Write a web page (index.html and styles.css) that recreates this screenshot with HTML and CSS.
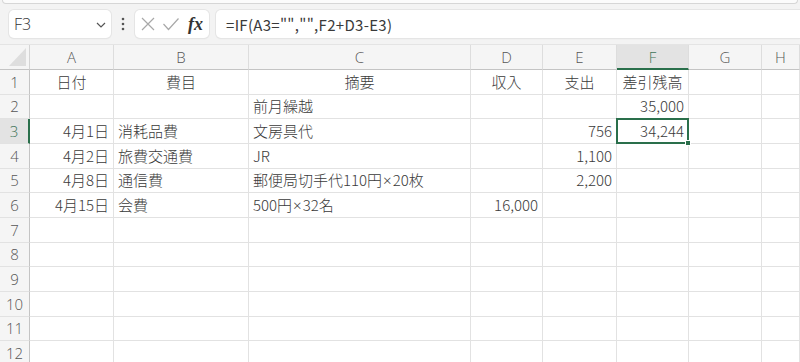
FILE: index.html
```html
<!DOCTYPE html>
<html lang="ja">
<head>
<meta charset="utf-8">
<link rel="stylesheet" href="styles.css">
</head>
<body>
<div class="app">
  <div class="toolbar">
    <div class="topstrip"></div>
    <div class="bar">
      <div class="namebox">
        <span class="name">F3</span>
        <svg class="chev" width="10" height="6" viewBox="0 0 10 6"><polyline points="1,1 5,5 9,1" fill="none" stroke="#555" stroke-width="1.2"/></svg>
      </div>
      <div class="dots">
        <svg width="4" height="14" viewBox="0 0 4 14"><circle cx="2" cy="2" r="1.3" fill="#555"/><circle cx="2" cy="7" r="1.3" fill="#555"/><circle cx="2" cy="12" r="1.3" fill="#555"/></svg>
      </div>
      <div class="fxbox">
        <svg class="ico" width="16" height="16" viewBox="0 0 16 16"><path d="M2 2 L14 14 M14 2 L2 14" stroke="#a8a8a8" stroke-width="1.2" fill="none"/></svg>
        <svg class="ico" width="18" height="16" viewBox="0 0 18 16"><polyline points="1.5,8 6.5,13.5 16.5,2.5" stroke="#a8a8a8" stroke-width="1.2" fill="none"/></svg>
        <span class="fx">fx</span>
      </div>
      <div class="formula">=IF(A3="","",F2+D3-E3)</div>
    </div>
  </div>
  <div class="sheet">
    <div class="corner"></div>
    <div class="ch">A</div><div class="ch">B</div><div class="ch">C</div><div class="ch">D</div><div class="ch">E</div><div class="ch sel">F</div><div class="ch">G</div><div class="ch">H</div>

    <div class="rh">1</div><div class="c ctr">日付</div><div class="c ctr">費目</div><div class="c ctr">摘要</div><div class="c ctr">収入</div><div class="c ctr">支出</div><div class="c ctr">差引残高</div><div class="c"></div><div class="c"></div>

    <div class="rh">2</div><div class="c"></div><div class="c"></div><div class="c">前月繰越</div><div class="c"></div><div class="c"></div><div class="c r">35,000</div><div class="c"></div><div class="c"></div>

    <div class="rh sel">3</div><div class="c r">4月1日</div><div class="c">消耗品費</div><div class="c">文房具代</div><div class="c"></div><div class="c r">756</div><div class="c r active">34,244<span class="handle"></span></div><div class="c"></div><div class="c"></div>

    <div class="rh">4</div><div class="c r">4月2日</div><div class="c">旅費交通費</div><div class="c">JR</div><div class="c"></div><div class="c r">1,100</div><div class="c"></div><div class="c"></div><div class="c"></div>

    <div class="rh">5</div><div class="c r">4月8日</div><div class="c">通信費</div><div class="c">郵便局切手代110円<span class="x">×</span>20枚</div><div class="c"></div><div class="c r">2,200</div><div class="c"></div><div class="c"></div><div class="c"></div>

    <div class="rh">6</div><div class="c r">4月15日</div><div class="c">会費</div><div class="c">500円<span class="x">×</span>32名</div><div class="c r">16,000</div><div class="c"></div><div class="c"></div><div class="c"></div><div class="c"></div>

    <div class="rh">7</div><div class="c"></div><div class="c"></div><div class="c"></div><div class="c"></div><div class="c"></div><div class="c"></div><div class="c"></div><div class="c"></div>
    <div class="rh">8</div><div class="c"></div><div class="c"></div><div class="c"></div><div class="c"></div><div class="c"></div><div class="c"></div><div class="c"></div><div class="c"></div>
    <div class="rh">9</div><div class="c"></div><div class="c"></div><div class="c"></div><div class="c"></div><div class="c"></div><div class="c"></div><div class="c"></div><div class="c"></div>
    <div class="rh">10</div><div class="c"></div><div class="c"></div><div class="c"></div><div class="c"></div><div class="c"></div><div class="c"></div><div class="c"></div><div class="c"></div>
    <div class="rh">11</div><div class="c"></div><div class="c"></div><div class="c"></div><div class="c"></div><div class="c"></div><div class="c"></div><div class="c"></div><div class="c"></div>
    <div class="rh">12</div><div class="c"></div><div class="c"></div><div class="c"></div><div class="c"></div><div class="c"></div><div class="c"></div><div class="c"></div><div class="c"></div>
  </div>
</div>
</body>
</html>
```

FILE: styles.css
```css
* { box-sizing: border-box; }
html, body { margin: 0; padding: 0; }
body {
  width: 800px;
  height: 362px;
  overflow: hidden;
  background: #ffffff;
  font-family: "Noto Sans CJK JP", "Noto Sans", sans-serif;
}
.app { width: 800px; height: 362px; overflow: hidden; }

.toolbar {
  height: 45px;
  background: #f3f3f3;
  border-bottom: 1px solid #e4e4e4;
  display: flex;
  flex-direction: column;
}
.topstrip {
  height: 4px;
  margin: 0 2px;
  background: #fbfbfb;
  border: 1px solid #d6d6d6;
  border-top: none;
  border-radius: 0 0 6px 6px;
}
.bar {
  margin-top: 6px;
  display: flex;
  align-items: center;
  height: 28px;
  padding-left: 9px;
}
.namebox {
  width: 102px;
  height: 28px;
  background: #fff;
  border-radius: 5px;
  box-shadow: 0 0 0 1px #e5e5e5, 0 1px 2px rgba(0,0,0,0.06);
  display: flex;
  align-items: center;
  justify-content: space-between;
  padding: 0 5px 0 5px;
}
.name {
  font-family: "Open Sans", "Noto Sans", sans-serif;
  font-size: 16px;
  font-weight: 300;
  color: #333;
}
.chev { margin-top: 1px; }
.dots {
  width: 24px;
  display: flex;
  justify-content: center;
  align-items: center;
}
.fxbox {
  width: 74px;
  height: 28px;
  background: #fff;
  border-radius: 5px;
  box-shadow: 0 0 0 1px #e5e5e5, 0 1px 2px rgba(0,0,0,0.06);
  display: flex;
  align-items: center;
  padding-left: 5px;
  gap: 6px;
}
.fx {
  font-family: "Liberation Serif", "DejaVu Serif", serif;
  font-style: italic;
  font-weight: 700;
  font-size: 18px;
  color: #333;
  margin-left: 2px;
  line-height: 1;
}
.formula {
  flex: 1;
  margin-left: 7px;
  height: 28px;
  background: #fff;
  border-radius: 5px 0 0 5px;
  box-shadow: 0 0 0 1px #e5e5e5, 0 1px 2px rgba(0,0,0,0.06);
  display: flex;
  align-items: center;
  padding-left: 10px;
  font-size: 15px;
  color: #3a3a3a;
  letter-spacing: 0.3px;
  white-space: pre;
}

.sheet {
  display: grid;
  grid-template-columns: 30px 84px 135px 222px 72px 74px 72px 73px 1fr;
  grid-template-rows: 25px repeat(12, 24.67px);
}
.corner {
  position: relative;
  background: #f5f5f5;
  border-right: 1px solid #d4d4d4;
  border-bottom: 1px solid #c4c4c4;
}
.corner::after {
  content: "";
  position: absolute;
  right: 3px;
  bottom: 3px;
  width: 17px;
  height: 18px;
  background: #dedede;
  clip-path: polygon(100% 0, 100% 100%, 0 100%);
}
.ch {
  background: #f5f5f5;
  border-right: 1px solid #dddddd;
  border-bottom: 1px solid #c4c4c4;
  display: flex;
  align-items: center;
  justify-content: center;
  font-family: "Open Sans", "Noto Sans", sans-serif;
  font-size: 15px;
  font-weight: 300;
  color: #555;
}
.ch.sel {
  background: #e3e3e3;
  color: #3f7458;
  border-bottom: 2px solid #2a6f4b;
}
.rh {
  background: #f5f5f5;
  border-right: 1px solid #c4c4c4;
  border-bottom: 1px solid #e2e2e2;
  display: flex;
  align-items: center;
  justify-content: center;
  font-family: "Open Sans", "Noto Sans", sans-serif;
  font-size: 15px;
  font-weight: 300;
  color: #555;
}
.rh.sel {
  background: #e3e3e3;
  color: #3f7458;
  border-right: 2px solid #2a6f4b;
}
.c {
  border-right: 1px solid #e2e2e2;
  border-bottom: 1px solid #e2e2e2;
  display: flex;
  align-items: center;
  padding: 0 4px;
  font-size: 15px;
  font-weight: 300;
  color: #3a3a3a;
  white-space: nowrap;
  line-height: 20px;
}
.x { font-family: "Noto Sans", sans-serif; font-weight: 300; padding: 0 1px; }
.c.ctr { justify-content: center; }
.c.r { justify-content: flex-end; }
.c.active { position: relative; }
.c.active::after {
  content: "";
  position: absolute;
  left: -1px;
  top: -1px;
  right: -1px;
  bottom: -1px;
  border: 2px solid #2a6f4b;
}
.handle {
  position: absolute;
  right: -3px;
  bottom: -3px;
  width: 6px;
  height: 6px;
  background: #2a6f4b;
  border: 1px solid #fff;
  z-index: 2;
}
```
